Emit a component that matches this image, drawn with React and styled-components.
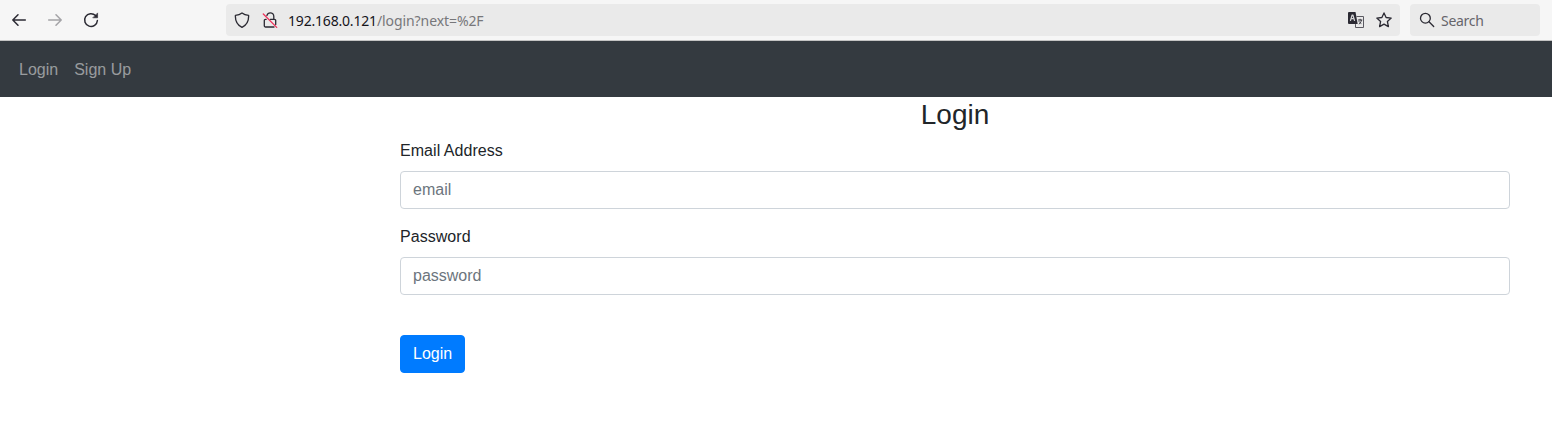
import React from "react";
import styled, { createGlobalStyle } from "styled-components";

const GlobalStyle = createGlobalStyle`
  *, *::before, *::after { box-sizing: border-box; }
  body {
    margin: 0;
    background: #fff;
    color: #212529;
    font: 400 16px/1.5 "Liberation Sans", Arial, sans-serif;
    overflow: hidden;
  }
`;

const Toolbar = styled.header`
  display: flex;
  align-items: center;
  height: 41px;
  padding: 0 12px 0 11px;
  border-bottom: 1px solid #c4c4c4;
  background: #f6f6f6;
  color: #2b2a33;
  font: 14px/20px "Noto Sans", sans-serif;
`;

const NavButtons = styled.div`
  display: flex;
  gap: 20px;
  width: 215px;
`;

const Icon = styled.svg`
  display: block;
  flex: none;
  width: 16px;
  height: 16px;
  fill: none;
  stroke: currentColor;
  stroke-width: ${(p) => p.$weight || 1.3};
  stroke-linecap: round;
  stroke-linejoin: round;
  opacity: ${(p) => (p.$faded ? 0.4 : 1)};
`;

const AddressBar = styled.div`
  display: flex;
  align-items: center;
  flex: 1;
  gap: 12px;
  height: 32px;
  padding: 0 8px;
  border-radius: 4px;
  background: #eaeaea;
`;

const Url = styled.div`
  flex: 1;
  padding-top: 2px;
  margin-left: -2px;
  white-space: nowrap;
`;

const Host = styled.span`
  color: #15141a;
  letter-spacing: -0.19px;
`;

const Path = styled.span`
  color: #77777a;
  letter-spacing: -0.08px;
`;

const SearchBox = styled.div`
  display: flex;
  align-items: center;
  gap: 6px;
  width: 130px;
  height: 32px;
  margin-left: 10px;
  padding: 0 9px;
  border-radius: 4px;
  background: #eaeaea;
`;

const SearchHint = styled.span`
  padding-top: 2px;
  color: #66656a;
  letter-spacing: -0.28px;
`;

const Navbar = styled.nav`
  display: flex;
  align-items: center;
  height: 56px;
  padding: 2px 11px 0;
  background: #343a40;
`;

const NavLink = styled.a`
  padding: 8px;
  color: rgba(255, 255, 255, 0.5);
`;

const Form = styled.form`
  width: 1110px;
  margin-left: 400px;
`;

const Title = styled.h3`
  margin: 0 0 7px;
  padding-top: 1px;
  font-size: 28px;
  font-weight: 500;
  line-height: 1.2;
  text-align: center;
`;

const Field = styled.div`
  margin-bottom: 16px;
`;

const Label = styled.label`
  display: block;
  margin-bottom: 8px;
  letter-spacing: 0.05px;
`;

const Input = styled.input`
  display: block;
  width: 100%;
  height: 38px;
  padding: 6px 12px;
  border: 1px solid #ced4da;
  border-radius: 4px;
  background: #fff;
  color: #495057;
  font: inherit;

  &::placeholder {
    color: #6c757d;
    opacity: 1;
  }
`;

const SubmitButton = styled.button`
  display: block;
  height: 38px;
  margin-top: 40px;
  padding: 6px 12px;
  border: 1px solid #007bff;
  border-radius: 4px;
  background: #007bff;
  color: #fff;
  font: inherit;
`;

function TranslateIcon() {
  return (
    <Icon viewBox="0 0 16 16" $weight={1}>
      <path d="M9 4.5h6.5v11h-8V12.5" stroke="#5b5a62" />
      <path d="M1 0h6.5l2.2 12H1a1 1 0 0 1-1-1V1a1 1 0 0 1 1-1Z" fill="currentColor" stroke="none" />
      <path d="m2.5 8.5 1.6-5.5h.8l1.6 5.5M3.2 6.7h2.6" stroke="#d5d5d7" strokeWidth="1.2" />
      <path d="M10.3 8h3.6M12.1 7.2V8M13.4 8.3c-.3 1.7-1 2.8-2.2 3.6M11 9.5c.6.9 1.2 1.5 2 1.9" strokeWidth=".9" />
    </Icon>
  );
}

export default function App() {
  return (
    <>
      <GlobalStyle />
      <Toolbar>
        <NavButtons>
          <Icon viewBox="0 0 16 16" $weight={1.5}>
            <path d="M14.3 8H1.8M7 2.8 1.8 8 7 13.2" />
          </Icon>
          <Icon viewBox="0 0 16 16" $weight={1.5} $faded>
            <path d="M1.7 8h12.5M9 2.8 14.2 8 9 13.2" />
          </Icon>
          <Icon viewBox="0 0 16 16" $weight={1.5}>
            <path d="M12.6 3.6A6.4 6.4 0 1 0 14.4 8.5" />
            <path d="M14.6 1.3v4.5h-4.5Z" fill="currentColor" strokeWidth=".6" />
          </Icon>
        </NavButtons>
        <AddressBar>
          <Icon viewBox="0 0 16 16">
            <path d="M8 .9c2 1.5 4 2.1 6.6 2.4.3 5.3-1.4 9.5-6.6 12-5.2-2.5-6.9-6.7-6.6-12C4 3 6 2.4 8 .9Z" />
          </Icon>
          <Icon viewBox="0 0 16 16">
            <path d="M4.9 3.6C5.4 1.8 6.6.8 8.3.8c2 0 3.5 1.4 3.5 3.7v2.8M4.2 7.3h-.7a1.2 1.2 0 0 0-1.2 1.2v5.3A1.2 1.2 0 0 0 3.5 15H12M8.3 7.3h4.2a1.2 1.2 0 0 1 1.2 1.2v4" />
            <path d="m1.3 2 13.4 13.4" stroke="#f0325c" />
          </Icon>
          <Url>
            <Host>192.168.0.121</Host>
            <Path>/login?next=%2F</Path>
          </Url>
          <TranslateIcon />
          <Icon viewBox="0 0 16 16">
            <path d="m8 .9 2.1 4.6 5.1.6-3.8 3.4 1 5.1L8 12.1l-4.4 2.5 1-5.1L.8 6.1l5.1-.6Z" />
          </Icon>
        </AddressBar>
        <SearchBox>
          <Icon viewBox="0 0 16 16">
            <circle cx="6.4" cy="6.2" r="4.9" />
            <path d="m10 9.8 4.7 4.7" />
          </Icon>
          <SearchHint>Search</SearchHint>
        </SearchBox>
      </Toolbar>
      <Navbar>
        <NavLink>Login</NavLink>
        <NavLink>Sign Up</NavLink>
      </Navbar>
      <Form>
        <Title>Login</Title>
        <Field>
          <Label htmlFor="email">Email Address</Label>
          <Input id="email" type="email" placeholder="email" />
        </Field>
        <Field>
          <Label htmlFor="password">Password</Label>
          <Input id="password" type="password" placeholder="password" />
        </Field>
        <SubmitButton type="button">Login</SubmitButton>
      </Form>
    </>
  );
}
